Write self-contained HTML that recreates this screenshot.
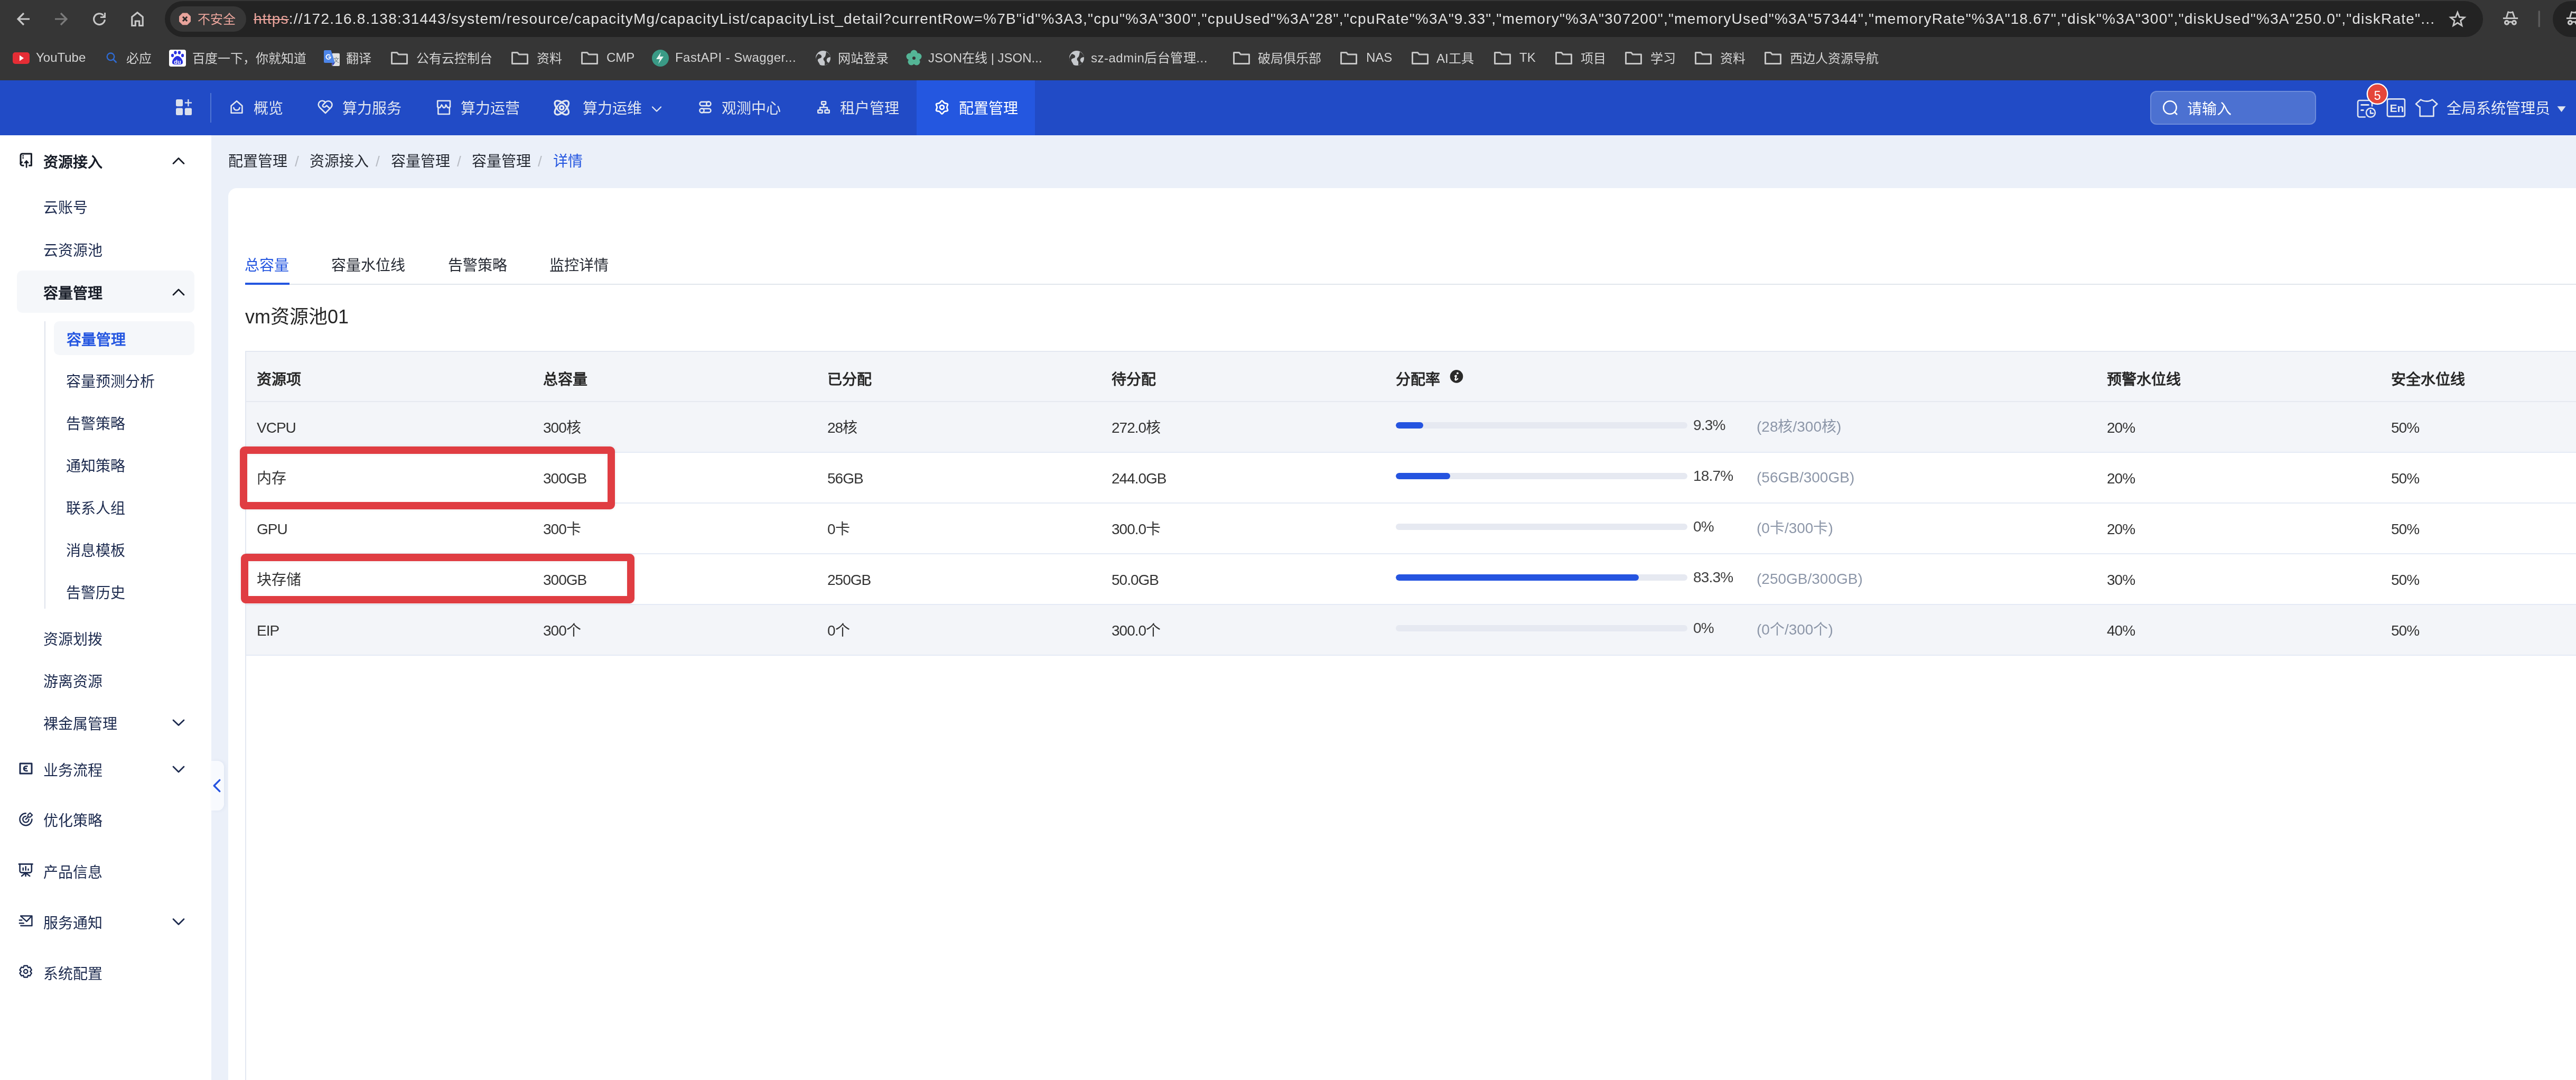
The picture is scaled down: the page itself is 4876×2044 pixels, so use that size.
<!DOCTYPE html>
<html lang="zh-CN">
<head>
<meta charset="utf-8">
<style>
*{margin:0;padding:0;box-sizing:border-box}
html,body{width:4876px;height:2044px;overflow:hidden;background:#fff;font-family:"Liberation Sans",sans-serif}
.a{position:absolute}
.t{position:absolute;white-space:nowrap;line-height:1}
svg.i{position:absolute;overflow:visible}
#toolbar{left:0;top:0;width:4876px;height:72px;background:#363636}
#omni{left:312px;top:2px;width:4388px;height:68px;border-radius:34px;background:#232323}
#omni2{left:4832px;top:2px;width:200px;height:68px;border-radius:34px;background:#232323}
#chip{left:322px;top:12px;width:144px;height:48px;border-radius:24px;background:#373737}
#bm{left:0;top:72px;width:4876px;height:80px;background:#363636}
.bmt{font-size:24px;color:#d4d4d4;top:99px}
#hdr{left:0;top:152px;width:4876px;height:104px;background:#214bc6}
#act{left:1735px;top:152px;width:224px;height:104px;background:#2457e0}
.nav{font-size:28px;color:#e1e6f0;top:192px}
#side{left:0;top:256px;width:400px;height:1788px;background:#fff}
#content{left:400px;top:256px;width:4476px;height:1788px;background:#ebf0f9}
#card{left:432px;top:356px;width:4500px;height:1800px;background:#fff;border-radius:16px 0 0 0}
.sd{font-size:28px;color:#1d2b4f}
.sdb{font-size:28px;color:#161b26;font-weight:700}
.bc{font-size:28px;color:#262a33;top:292px}
.sl{font-size:28px;color:#b8bcc4;top:292px}
.tab{font-size:28px;color:#262a33;top:489px}
.th{font-size:28px;color:#262626;font-weight:700;top:705px}
.td{font-size:28px;color:#333}
.lat{letter-spacing:-1px}
.pct{font-size:28px;color:#3d3d3d;letter-spacing:-0.8px}
.par{font-size:28px;color:#8c96a8;letter-spacing:0px}
.bar{position:absolute;left:2642px;width:552px;height:12px;border-radius:6px;background:#e6e9f1;overflow:hidden}
.fill{position:absolute;left:0;top:0;height:12px;border-radius:6px;background:#2554e0}
.red{position:absolute;border:14px solid #e03d42;border-radius:9px;box-shadow:0 0 6px rgba(0,0,0,0.08),inset 0 2px 5px rgba(0,0,0,0.05)}
</style>
</head>
<body>
<div id="root" style="position:absolute;left:0;top:0;width:4876px;height:2044px;overflow:hidden;will-change:transform">
<!-- ===== browser toolbar ===== -->
<div id="toolbar" class="a"></div>
<div id="omni" class="a"></div>
<div id="omni2" class="a"></div>
<div id="chip" class="a"></div>
<svg class="i" style="left:0;top:0" width="320" height="72">
 <g fill="none" stroke="#c7c7c7" stroke-width="3.2" stroke-linecap="butt" stroke-linejoin="miter">
  <path d="M56 36H35M45 25L34 36L45 47"/>
 </g>
 <g fill="none" stroke="#7b7b7b" stroke-width="3.2">
  <path d="M104 36H125M115 25L126 36L115 47"/>
 </g>
 <g fill="none" stroke="#c7c7c7" stroke-width="3.2">
  <path d="M198.4 37.2A10.4 10.4 0 1 1 195.2 28.6"/>
 </g>
 <path d="M197.2 24H200V34H190V31.2H194L197.2 28Z" fill="#c7c7c7"/>
 <g fill="none" stroke="#c7c7c7" stroke-width="3.2">
  <path d="M249.8 48.5V32L260 23.8L270.2 32V48.5H263.7V40H256.3V48.5Z"/>
 </g>
</svg>
<svg class="i" style="left:0;top:0" width="480" height="72">
 <path d="M345.5 24.6H354.5L361 31.1V40.7L354.5 47.2H345.5L339 40.7V31.1Z" fill="#e8a39b"/>
 <path d="M346 31.8L354.2 40M354.2 31.8L346 40" stroke="#2a2a2a" stroke-width="3"/>
</svg>
<div class="t" style="left:374px;top:25px;font-size:24px;color:#eaa59c">不安全</div>
<div class="t" style="left:480px;top:22px;font-size:28px;letter-spacing:1.22px;color:#e3e3e3"><span style="color:#e9a39b;text-decoration:line-through;text-decoration-thickness:2px">https</span>://172.16.8.138:31443/system/resource/capacityMg/capacityList/capacityList_detail?currentRow=%7B"id"%3A3,"cpu"%3A"300","cpuUsed"%3A"28","cpuRate"%3A"9.33","memory"%3A"307200","memoryUsed"%3A"57344","memoryRate"%3A"18.67","disk"%3A"300","diskUsed"%3A"250.0","diskRate"...</div>
<svg class="i" style="left:4600px;top:0" width="276" height="72">
 <path d="M51.80 23.40L55.33 32.35L64.92 32.94L57.51 39.05L59.91 48.36L51.80 43.20L43.69 48.36L46.09 39.05L38.68 32.94L48.27 32.35Z" fill="none" stroke="#c8c8c8" stroke-width="2.8" stroke-linejoin="miter"/>
 <g id="incog">
  <rect x="137.9" y="33.1" width="28.2" height="2.9" fill="#c8c8c8"/>
  <path d="M144.5 33.1L147.6 22.8Q151.9 24.8 156 22.8L159.5 33.1" fill="none" stroke="#c8c8c8" stroke-width="2.9" stroke-linejoin="round"/>
  <circle cx="144.9" cy="42.8" r="3.4" fill="none" stroke="#c8c8c8" stroke-width="3.2"/>
  <circle cx="158.9" cy="42.8" r="3.4" fill="none" stroke="#c8c8c8" stroke-width="3.2"/>
  <path d="M148.3 42.2Q151.9 40.6 155.5 42.2" fill="none" stroke="#c8c8c8" stroke-width="2.6"/>
 </g>
 <rect x="204.5" y="20" width="3.5" height="31.5" rx="1.7" fill="#5b5b5b"/>
 <use href="#incog" x="120"/>
</svg>

<!-- ===== bookmarks ===== -->
<div id="bm" class="a"></div>
<svg class="i" style="left:0;top:72px" width="4876" height="80">
 <!-- youtube -->
 <rect x="24" y="27" width="32" height="22" rx="5" fill="#e52d35"/>
 <path d="M37 32.5L45 38L37 43.5Z" fill="#fff"/>
 <!-- bing search -->
 <circle cx="209.5" cy="35.3" r="6.8" fill="none" stroke="#2f6bd3" stroke-width="2.4"/>
 <path d="M214.3 40.2L220.5 46.5" stroke="#2f6bd3" stroke-width="2.6"/>
 <!-- baidu -->
 <rect x="320" y="22" width="32" height="32" rx="4" fill="#fff"/>
 <g fill="#2932e1">
  <ellipse cx="326.5" cy="33" rx="2.6" ry="3.3"/><ellipse cx="332" cy="27.6" rx="2.7" ry="3.3"/>
  <ellipse cx="339.5" cy="27.6" rx="2.7" ry="3.3"/><ellipse cx="345.5" cy="33" rx="2.6" ry="3.3"/>
  <path d="M336 34C331 34 325 42 326 47C327 51 333 50 336 50C339 50 345 51 346 47C347 42 341 34 336 34Z"/>
 </g>
 <text x="336" y="49" font-size="11" font-family="Liberation Sans" font-weight="700" fill="#fff" text-anchor="middle">du</text>
 <!-- google translate -->
 <rect x="628.3" y="28.8" width="14.7" height="24.2" rx="2" fill="#e2e2e2"/>
 <path d="M628 47L634 47L629.6 52.8Z" fill="#3a48bf"/>
 <path d="M615 22.9H626.6L634 46.9H615A2 2 0 0 1 613 44.9V24.9A2 2 0 0 1 615 22.9Z" fill="#4d86ea"/>
 <path d="M625 33.2A4.2 4.2 0 1 0 625.8 36H621.6" fill="none" stroke="#fff" stroke-width="1.9"/>
 <text x="631.2" y="45.5" font-size="11" font-family="Liberation Sans" fill="#5e6e76">文</text>
 <!-- folders -->
 <g fill="none" stroke="#c4c4c4" stroke-width="3" stroke-linejoin="round">
  <path id="fd" d="M741.5 27.5H751.5L754.5 31H770.5V48.5H741.5Z"/>
  <use href="#fd" x="228"/>
  <use href="#fd" x="360"/>
  <use href="#fd" x="1594"/>
  <use href="#fd" x="1797"/>
  <use href="#fd" x="1932"/>
  <use href="#fd" x="2088"/>
  <use href="#fd" x="2204"/>
  <use href="#fd" x="2336"/>
  <use href="#fd" x="2468"/>
  <use href="#fd" x="2600"/>
 </g>
 <!-- fastapi -->
 <circle cx="1250" cy="38" r="16" fill="#3a9a86"/>
 <path d="M1251 27L1242 40H1249L1246 49L1256 35H1249Z" fill="#e9f5f1"/>
 <!-- globes -->
 <g id="gl">
  <circle cx="1558" cy="38" r="14" fill="#c5c8cc"/>
  <path d="M1549 30C1553 31 1556 33 1555 36C1554 39 1549 38 1548 41C1547 44 1551 47 1552 51C1549 50 1545 46 1544 41C1544 37 1546 33 1549 30ZM1564 26C1568 28 1571 31 1572 36C1569 36 1566 37 1565 40C1564 43 1566 46 1569 47C1567 49 1564 51 1561 51.5C1561 48 1562 45 1560 43C1558 41 1558 38 1561 36C1563 34 1563 30 1564 26Z" fill="#363636"/>
 </g>
 <use href="#gl" x="480"/>
 <!-- json flower -->
 <g fill="#54b596">
  <circle cx="1730" cy="29" r="6.5"/><circle cx="1738" cy="35" r="6.5"/><circle cx="1735" cy="45" r="6.5"/>
  <circle cx="1725" cy="45" r="6.5"/><circle cx="1722" cy="35" r="6.5"/><circle cx="1730" cy="38" r="7"/>
 </g>
 <circle cx="1730" cy="38" r="3" fill="#363636"/>
</svg>
<div class="t bmt" style="left:68px;top:97px">YouTube</div>
<div class="t bmt" style="left:239px">必应</div>
<div class="t bmt" style="left:364px">百度一下，你就知道</div>
<div class="t bmt" style="left:655px">翻译</div>
<div class="t bmt" style="left:788px">公有云控制台</div>
<div class="t bmt" style="left:1016px">资料</div>
<div class="t bmt" style="left:1148px;top:97px">CMP</div>
<div class="t bmt" style="left:1278px;top:97px;letter-spacing:0.45px">FastAPI - Swagger...</div>
<div class="t bmt" style="left:1586px">网站登录</div>
<div class="t bmt" style="left:1757px;top:98px">JSON在线 | JSON...</div>
<div class="t bmt" style="left:2065px;top:98px;letter-spacing:0.5px">sz-admin后台管理...</div>
<div class="t bmt" style="left:2381px">破局俱乐部</div>
<div class="t bmt" style="left:2586px;top:97px">NAS</div>
<div class="t bmt" style="left:2719px">AI工具</div>
<div class="t bmt" style="left:2876px;top:97px">TK</div>
<div class="t bmt" style="left:2992px">项目</div>
<div class="t bmt" style="left:3124px">学习</div>
<div class="t bmt" style="left:3256px">资料</div>
<div class="t bmt" style="left:3388px">西边人资源导航</div>
<!-- ===== app header ===== -->
<div id="hdr" class="a"></div>
<div id="act" class="a"></div>
<svg class="i" style="left:0;top:152px" width="4876" height="104">
 <g fill="#dbe0ec">
  <rect x="333" y="36" width="13" height="13.3" rx="2.5"/>
  <rect x="333" y="52.6" width="13" height="13.4" rx="2.5"/>
  <rect x="349.8" y="52.6" width="13.2" height="13.4" rx="2.5"/>
  <rect x="349.8" y="41.3" width="13.2" height="2.4"/>
  <rect x="355.2" y="36" width="2.4" height="13.3"/>
 </g>
 <rect x="398" y="24" width="2" height="56" fill="#5075d3"/>
 <g fill="none" stroke="#e1e6f0" stroke-width="2.6" stroke-linejoin="round" stroke-linecap="round">
  <!-- home smile -->
  <path d="M437.6 48.2V61.8H458.4V48.2L448 39.2Z"/>
  <path d="M442.3 51.8A5.8 5.8 0 0 0 453.7 51.8"/>
  <!-- heart -->
  <path d="M616 62L605 51.2A7.2 7.2 0 1 1 615.8 41.8A7.2 7.2 0 1 1 626.8 51.2Z"/>
  <path d="M615.8 41.8L611.6 46.2Q609.7 48.7 611.9 50.2Q613.9 51.4 615.9 50L618.3 47.8L624.6 53.6"/>
  <!-- frame -->
  <path d="M828.2 50.2V38.8H852V50.2"/>
  <path d="M828.2 50.2Q830.8 52.8 833.4 51.2L836 46.4L838.8 51.2Q840 52.6 842.4 51.2L844 46.4L846.8 51.2Q849.4 52.8 852 50.2"/>
  <path d="M829.4 51.4V64H850.8V51.4"/>
  <!-- observation -->
  <path d="M1341.3 40.9H1328.2A3.6 3.6 0 0 0 1328.2 48.1H1341.3"/>
  <circle cx="1341.3" cy="44.5" r="4.1"/>
  <path d="M1328.5 53.7H1341.8A3.6 3.6 0 0 1 1341.8 60.9H1328.5"/>
  <circle cx="1328.5" cy="57.3" r="4.1"/>
  <!-- tenant -->
  <rect x="1555.1" y="40.2" width="8" height="5.4" rx="0.8"/>
  <rect x="1548.3" y="56.2" width="8.2" height="5.6" rx="0.8"/>
  <rect x="1561.5" y="56.2" width="8.2" height="5.6" rx="0.8"/>
  <path d="M1559.1 45.6V51.3M1552.2 56.2V51.3H1565.9V56.2"/>
  <!-- chevron -->
  <path d="M1235 50.5L1243 58.5L1251 50.5" stroke-width="2.4"/>
 </g>
 <!-- atom icon -->
 <g fill="none" stroke="#e1e6f0" stroke-width="3.3">
  <ellipse cx="1063.3" cy="51.8" rx="16.8" ry="8" transform="rotate(45 1063.3 51.8)"/>
  <ellipse cx="1063.3" cy="51.8" rx="16.8" ry="8" transform="rotate(-45 1063.3 51.8)"/>
 </g>
 <circle cx="1063.2" cy="51.9" r="7.2" fill="#214bc6"/>
 <circle cx="1063.2" cy="51.9" r="3.7" fill="none" stroke="#e1e6f0" stroke-width="3.4"/>
 <!-- gear -->
 <g fill="none" stroke="#fff" stroke-width="2.8" stroke-linejoin="round">
  <path d="M1783.00 38.70C1785.02 38.70 1785.32 41.70 1787.65 43.05C1789.98 44.39 1792.73 43.15 1793.74 44.90C1794.75 46.65 1792.30 48.41 1792.30 51.10C1792.30 53.79 1794.75 55.55 1793.74 57.30C1792.73 59.05 1789.98 57.81 1787.65 59.15C1785.32 60.50 1785.02 63.50 1783.00 63.50C1780.98 63.50 1780.68 60.50 1778.35 59.15C1776.02 57.81 1773.27 59.05 1772.26 57.30C1771.25 55.55 1773.70 53.79 1773.70 51.10C1773.70 48.41 1771.25 46.65 1772.26 44.90C1773.27 43.15 1776.02 44.39 1778.35 43.05C1780.68 41.70 1780.98 38.70 1783.00 38.70Z"/>
  <circle cx="1783" cy="51.1" r="3.9"/>
 </g>
</svg>
<div class="t nav" style="left:480px">概览</div>
<div class="t nav" style="left:648px">算力服务</div>
<div class="t nav" style="left:872px">算力运营</div>
<div class="t nav" style="left:1103px">算力运维</div>
<div class="t nav" style="left:1366px">观测中心</div>
<div class="t nav" style="left:1590px">租户管理</div>
<div class="t nav" style="left:1815px;color:#fff">配置管理</div>
<!-- search -->
<div class="a" style="left:4070px;top:172px;width:314px;height:64px;border-radius:12px;background:#4c71d1;border:2px solid #6d8cdb"></div>
<svg class="i" style="left:4060px;top:160px" width="100" height="90">
 <circle cx="47.4" cy="43.5" r="12.2" fill="none" stroke="#fff" stroke-width="2.6"/>
 <path d="M56 52L61 57" stroke="#fff" stroke-width="2.6"/>
</svg>
<div class="t" style="left:4140px;top:193px;font-size:28px;color:#fff">请输入</div>
<!-- right icons -->
<svg class="i" style="left:4400px;top:152px" width="476" height="104">
 <g fill="none" stroke="#e1e6f0" stroke-width="2.6" stroke-linejoin="round" stroke-linecap="round">
  <path d="M76.7 69.5H66A3 3 0 0 1 63 66.5V41A3 3 0 0 1 66 38H87A3 3 0 0 1 90 41V48.4"/>
  <path d="M69.6 46.5H83.3M69.6 56.5H73.3" stroke-width="3"/>
  <circle cx="87.4" cy="61.3" r="8.5"/>
  <path d="M87 57.3V62.4H91.9"/>
  <rect x="118.9" y="35.4" width="33" height="33" rx="2.8"/>
  <path d="M182.2 36.5C185.5 38.8 189 39.6 193.3 39.6C197.6 39.6 201 38.8 203.9 36.5L213.3 44.8L207.3 50.3H206.4V67.9H180.6V50.3H179.4L173 44.8Z"/>
 </g>
 <text x="123.4" y="59.6" font-size="21" font-family="Liberation Sans" font-weight="700" fill="#e1e6f0">En</text>
 <circle cx="100" cy="25.8" r="19.2" fill="#e5463a" stroke="#fff" stroke-width="2.4"/>
 <text x="100" y="37" font-size="23.5" font-family="Liberation Sans" fill="#fff" text-anchor="middle">5</text>
 <path d="M440.5 49.2H456.5L448.5 60Z" fill="#dfe4ee"/>
</svg>
<div class="t nav" style="left:4631px;color:#e9edf5">全局系统管理员</div>
<!-- ===== sidebar ===== -->
<div id="side" class="a"></div>
<div class="a" style="left:32px;top:512px;width:336px;height:80px;border-radius:10px;background:#f5f7fa"></div>
<div class="a" style="left:102px;top:608px;width:266px;height:64px;border-radius:10px;background:#f5f7fa"></div>
<div class="a" style="left:84px;top:608px;width:2px;height:544px;background:#dfe3ec"></div>
<svg class="i" style="left:0;top:256px" width="400" height="1788">
 <g fill="none" stroke="#161b26" stroke-width="3" stroke-linejoin="round">
  <!-- resource access icon -->
  <path d="M45.5 57.2H42.2A3.2 3.2 0 0 1 39 54V38.2A3.3 3.3 0 0 1 42.3 34.9H59.4V57.2H54.3"/>
  <path d="M42.8 50.9H42.2A3.2 3.2 0 0 0 39 54.1"/>
  <path d="M59.4 50.9H57.6"/>
  <path d="M50.1 52.4V60.4" stroke-width="2.6" stroke-linecap="round"/>
  <path d="M50.1 47.2L45.3 52.6H54.8Z" fill="#161b26" stroke-width="0.8"/>
  <rect x="42.4" y="37.7" width="2.5" height="2.5" fill="#161b26" stroke="none"/>
  <rect x="42.4" y="41.6" width="2.5" height="2.5" fill="#161b26" stroke="none"/>
 </g>
 <g fill="none" stroke="#161b26" stroke-width="2.8" stroke-linecap="round" stroke-linejoin="round">
  <path d="M328 53.5L338 43.5L348 53.5"/>
  <path d="M328 302L338 292L348 302"/>
 </g>
 <g fill="none" stroke="#1d2b4f" stroke-width="2.8" stroke-linecap="round" stroke-linejoin="round">
  <path d="M328 1107L338 1116.6L348 1107"/>
  <path d="M328 1195L338 1205L348 1195"/>
  <path d="M328 1483.5L338 1493.5L348 1483.5"/>
 </g>
 <g fill="none" stroke="#1d2b4f" stroke-width="3" stroke-linejoin="round">
  <!-- business process -->
  <rect x="38" y="1189" width="22" height="19"/>
  <path d="M52.5 1194.5C49 1193 45 1195 45 1198.5C45 1202 49 1204 52.5 1202.5M45 1198.5H51" stroke-width="2.6"/>
  <!-- optimize target -->
  <path d="M48.9 1283.2A11.5 11.5 0 1 0 60.4 1294.4" stroke-width="2.4" stroke-linecap="round"/>
  <path d="M48.9 1289A5.7 5.7 0 1 0 54.6 1294.4" stroke-width="2.4" stroke-linecap="round"/>
  <path d="M48.7 1294.7L53 1290.3" stroke-width="2.4" stroke-linecap="round"/>
  <path d="M52.9 1290L52.8 1286.2L56.9 1282.5L61.1 1286.6L56.7 1290.7Z" stroke-width="2.2"/>
  <!-- product info -->
  <g stroke-width="2.6" stroke-linecap="round">
  <path d="M35.9 1379.4H61.5"/>
  <path d="M37.6 1379.4V1392.2A3.4 3.4 0 0 0 41 1395.6H56.4A3.4 3.4 0 0 0 59.8 1392.2V1379.4"/>
  <path d="M43.7 1386.7V1390.7M48.7 1384.3V1390.7M53.5 1388.9V1390.7"/>
  <path d="M48.5 1395.9L41.1 1401.9M48.6 1395.9V1401.9M48.7 1395.9L56.3 1401.9"/>
  </g>
  <!-- service notify -->
  <g stroke-width="2.5" stroke-linecap="round">
  <path d="M39.4 1477.5H60.4V1496H39.4"/>
  <path d="M39.4 1477.9L50.4 1487.9L59.6 1478.2"/>
  <path d="M36.9 1485.6H41.3M36.9 1491.2H44.8"/>
  </g>
  <!-- system config gear -->
  <path d="M45.37 1571.81L51.85 1571.81L53.15 1575.33L56.67 1574.41L59.81 1579.78L57.22 1582.56L59.81 1585.70L56.67 1590.89L53.15 1589.96L51.85 1593.48L45.37 1593.48L44.26 1589.96L40.56 1590.89L37.41 1585.70L40.19 1582.56L37.41 1579.78L40.56 1574.41L44.26 1575.33Z" stroke-width="2.4"/>
  <circle cx="48.7" cy="1582.6" r="3.7" stroke-width="2.4"/>
 </g>
</svg>
<div class="t sdb" style="left:82px;top:294px">资源接入</div>
<div class="t sd" style="left:82px;top:380px">云账号</div>
<div class="t sd" style="left:82px;top:461px">云资源池</div>
<div class="t sdb" style="left:82px;top:542px">容量管理</div>
<div class="t sdb" style="left:126px;top:630px;color:#2456e0">容量管理</div>
<div class="t sd" style="left:125px;top:709px">容量预测分析</div>
<div class="t sd" style="left:125px;top:789px">告警策略</div>
<div class="t sd" style="left:125px;top:869px">通知策略</div>
<div class="t sd" style="left:125px;top:949px">联系人组</div>
<div class="t sd" style="left:125px;top:1029px">消息模板</div>
<div class="t sd" style="left:125px;top:1109px">告警历史</div>
<div class="t sd" style="left:82px;top:1197px">资源划拨</div>
<div class="t sd" style="left:82px;top:1277px">游离资源</div>
<div class="t sd" style="left:82px;top:1357px">裸金属管理</div>
<div class="t sd" style="left:82px;top:1445px">业务流程</div>
<div class="t sd" style="left:82px;top:1540px">优化策略</div>
<div class="t sd" style="left:82px;top:1638px">产品信息</div>
<div class="t sd" style="left:82px;top:1734px">服务通知</div>
<div class="t sd" style="left:82px;top:1830px">系统配置</div>

<!-- ===== content ===== -->
<div id="content" class="a"></div>
<div class="a" style="left:400px;top:1440px;width:24px;height:94px;border-radius:0 12px 12px 0;background:#f8fafe;box-shadow:2px 0 6px rgba(30,60,140,0.06)"></div>
<svg class="i" style="left:400px;top:1440px" width="30" height="94">
 <path d="M15.8 36.4L5.2 47L15.8 57.6" fill="none" stroke="#2553e0" stroke-width="3.4" stroke-linecap="round" stroke-linejoin="round"/>
</svg>
<div class="t bc" style="left:432px">配置管理</div>
<div class="t sl" style="left:558px">/</div>
<div class="t bc" style="left:586px">资源接入</div>
<div class="t sl" style="left:711px">/</div>
<div class="t bc" style="left:740px">容量管理</div>
<div class="t sl" style="left:865px">/</div>
<div class="t bc" style="left:893px">容量管理</div>
<div class="t sl" style="left:1018px">/</div>
<div class="t bc" style="left:1047px;color:#2456e0">详情</div>

<div id="card" class="a"></div>
<!-- tabs -->
<div class="t tab" style="left:463px;color:#2456e0">总容量</div>
<div class="t tab" style="left:627px">容量水位线</div>
<div class="t tab" style="left:848px">告警策略</div>
<div class="t tab" style="left:1040px">监控详情</div>
<div class="a" style="left:464px;top:537px;width:4412px;height:2px;background:#e1e5ec"></div>
<div class="a" style="left:464px;top:535px;width:84px;height:4px;background:#2456e0"></div>
<div class="t" style="left:464px;top:582px;font-size:36px;color:#262626">vm资源池01</div>
<!-- ===== table ===== -->
<div class="a" style="left:464px;top:664px;width:2px;height:1380px;background:#e3e8f1"></div>
<div class="a" style="left:466px;top:664px;width:4410px;height:97px;background:#f3f5f9;border-top:2px solid #e3e8f1;border-bottom:2px solid #e6e9f0"></div>
<div class="t th" style="left:486px">资源项</div>
<div class="t th" style="left:1028px">总容量</div>
<div class="t th" style="left:1566px">已分配</div>
<div class="t th" style="left:2104px">待分配</div>
<div class="t th" style="left:2642px">分配率</div>
<div class="t th" style="left:3988px">预警水位线</div>
<div class="t th" style="left:4526px">安全水位线</div>
<svg class="i" style="left:2740px;top:696px" width="34" height="34"><circle cx="17" cy="16.4" r="12.3" fill="#2a2a2a"/><circle cx="18.9" cy="10.3" r="1.9" fill="#fff"/><path d="M14.2 15.9Q16.6 13.6 16.5 15.6L14.6 21.6Q14.2 23.6 16 23.1Q17.8 22.4 19.2 20.8" fill="none" stroke="#fff" stroke-width="2.4" stroke-linecap="round" stroke-linejoin="round"/></svg>
<div class="a" style="left:466px;top:761px;width:4410px;height:96px;background:#f3f5f9;border-bottom:2px solid #e4eaf5"></div>
<div class="t td lat" style="left:486px;top:796px">VCPU</div>
<div class="t td lat" style="left:1028px;top:796px">300核</div>
<div class="t td lat" style="left:1566px;top:796px">28核</div>
<div class="t td lat" style="left:2104px;top:796px">272.0核</div>
<div class="bar" style="top:799px"><div class="fill" style="width:51.5px"></div></div>
<div class="t pct" style="left:3205px;top:791px">9.3%</div>
<div class="t par" style="left:3325px;top:794px">(28核/300核)</div>
<div class="t td lat" style="left:3988px;top:796px">20%</div>
<div class="t td lat" style="left:4526px;top:796px">50%</div>
<div class="a" style="left:466px;top:857px;width:4410px;height:96px;background:#fff;border-bottom:2px solid #e4eaf5"></div>
<div class="t td" style="left:486px;top:892px">内存</div>
<div class="t td lat" style="left:1028px;top:892px">300GB</div>
<div class="t td lat" style="left:1566px;top:892px">56GB</div>
<div class="t td lat" style="left:2104px;top:892px">244.0GB</div>
<div class="bar" style="top:895px"><div class="fill" style="width:103px"></div></div>
<div class="t pct" style="left:3205px;top:887px">18.7%</div>
<div class="t par" style="left:3325px;top:890px">(56GB/300GB)</div>
<div class="t td lat" style="left:3988px;top:892px">20%</div>
<div class="t td lat" style="left:4526px;top:892px">50%</div>
<div class="a" style="left:466px;top:953px;width:4410px;height:96px;background:#fff;border-bottom:2px solid #e4eaf5"></div>
<div class="t td lat" style="left:486px;top:988px">GPU</div>
<div class="t td lat" style="left:1028px;top:988px">300卡</div>
<div class="t td lat" style="left:1566px;top:988px">0卡</div>
<div class="t td lat" style="left:2104px;top:988px">300.0卡</div>
<div class="bar" style="top:991px"></div>
<div class="t pct" style="left:3205px;top:983px">0%</div>
<div class="t par" style="left:3325px;top:986px">(0卡/300卡)</div>
<div class="t td lat" style="left:3988px;top:988px">20%</div>
<div class="t td lat" style="left:4526px;top:988px">50%</div>
<div class="a" style="left:466px;top:1049px;width:4410px;height:96px;background:#fff;border-bottom:2px solid #e4eaf5"></div>
<div class="t td" style="left:486px;top:1084px">块存储</div>
<div class="t td lat" style="left:1028px;top:1084px">300GB</div>
<div class="t td lat" style="left:1566px;top:1084px">250GB</div>
<div class="t td lat" style="left:2104px;top:1084px">50.0GB</div>
<div class="bar" style="top:1087px"><div class="fill" style="width:460px"></div></div>
<div class="t pct" style="left:3205px;top:1079px">83.3%</div>
<div class="t par" style="left:3325px;top:1082px">(250GB/300GB)</div>
<div class="t td lat" style="left:3988px;top:1084px">30%</div>
<div class="t td lat" style="left:4526px;top:1084px">50%</div>
<div class="a" style="left:466px;top:1145px;width:4410px;height:96px;background:#f3f5f9;border-bottom:2px solid #e4eaf5"></div>
<div class="t td lat" style="left:486px;top:1180px">EIP</div>
<div class="t td lat" style="left:1028px;top:1180px">300个</div>
<div class="t td lat" style="left:1566px;top:1180px">0个</div>
<div class="t td lat" style="left:2104px;top:1180px">300.0个</div>
<div class="bar" style="top:1183px"></div>
<div class="t pct" style="left:3205px;top:1175px">0%</div>
<div class="t par" style="left:3325px;top:1178px">(0个/300个)</div>
<div class="t td lat" style="left:3988px;top:1180px">40%</div>
<div class="t td lat" style="left:4526px;top:1180px">50%</div>
<div class="red" style="left:454px;top:845px;width:710px;height:119px"></div>
<div class="red" style="left:456px;top:1048px;width:745px;height:94px"></div>
</div>
</body>
</html>
